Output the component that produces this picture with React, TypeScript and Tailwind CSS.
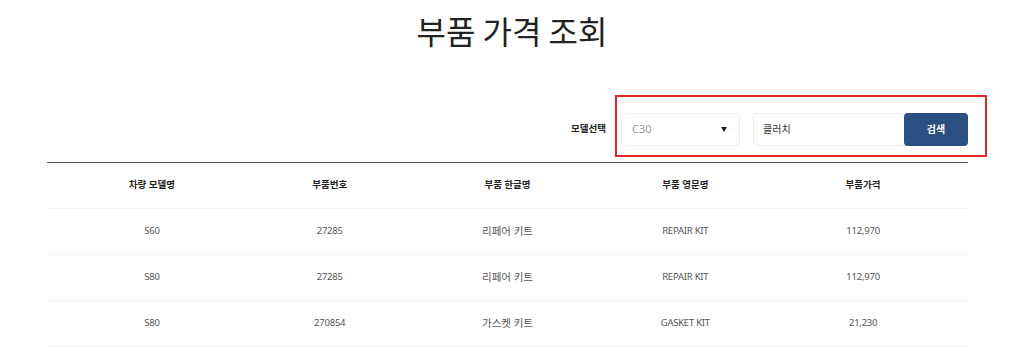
import React from "react";

const rows = [
  { model: "S60", no: "27285", ko: "리페어 키트", en: "REPAIR KIT", price: "112,970" },
  { model: "S80", no: "27285", ko: "리페어 키트", en: "REPAIR KIT", price: "112,970" },
  { model: "S80", no: "270854", ko: "가스켓 키트", en: "GASKET KIT", price: "21,230" },
];

const headers = ["차량 모델명", "부품번호", "부품 한글명", "부품 영문명", "부품가격"];

export default function App() {
  return (
    <div
      className="w-full h-[357px] overflow-hidden bg-white text-[#333]"
      style={{ fontFamily: '"Noto Sans", "Noto Sans CJK KR", sans-serif' }}
    >
      {/* Title */}
      <h1
        className="pt-[9px] text-center text-[32px] leading-[42px] font-normal text-[#222]"
        style={{ fontFamily: '"Noto Sans CJK KR", sans-serif' }}
      >
        부품 가격 조회
      </h1>

      {/* Search form */}
      <div className="ml-[47px] mt-[62px] flex w-[921px] items-center justify-end">
        <span className="mr-[15px] text-[9.5px] font-bold text-[#222]">모델선택</span>
        <div className="relative flex items-center gap-[13px]">
          <div className="flex h-[33px] w-[119px] items-center justify-between rounded-[4px] border border-[#ececec] pl-[10px] pr-[12px]">
            <span className="text-[11px] text-[#999]">C30</span>
            <span className="text-[6px] text-[#111]">▼</span>
          </div>
          <div className="flex h-[33px] w-[215px] items-center rounded-[4px] border border-[#ececec]">
            <span className="flex-1 pl-[9px] text-[10px] text-[#333]">클러치</span>
            <button className="-my-px -mr-px h-[33px] w-[64px] rounded-[4px] bg-[#2b4f80] text-[10px] font-bold text-white">
              검색
            </button>
          </div>
          {/* red annotation box */}
          <div className="pointer-events-none absolute -bottom-[11px] -left-[6px] -right-[19px] -top-[18px] border-2 border-[#e3262b]" />
        </div>
      </div>

      {/* Table */}
      <div className="ml-[47px] mt-[16px] w-[921px] border-t border-[#5a5a5a]">
        <div className="grid h-[46px] grid-cols-5 items-center border-b border-[#f0f0f0] px-4 text-center text-[9.5px] font-bold text-[#222]">
          {headers.map((h) => (
            <span key={h}>{h}</span>
          ))}
        </div>
        {rows.map((r, i) => (
          <div
            key={i}
            className="grid h-[46px] grid-cols-5 items-center border-b border-[#f0f0f0] px-4 text-center text-[9.5px] tracking-tight text-[#555]"
          >
            <span>{r.model}</span>
            <span>{r.no}</span>
            <span className="text-[10.5px] tracking-normal">{r.ko}</span>
            <span>{r.en}</span>
            <span>{r.price}</span>
          </div>
        ))}
      </div>
    </div>
  );
}
